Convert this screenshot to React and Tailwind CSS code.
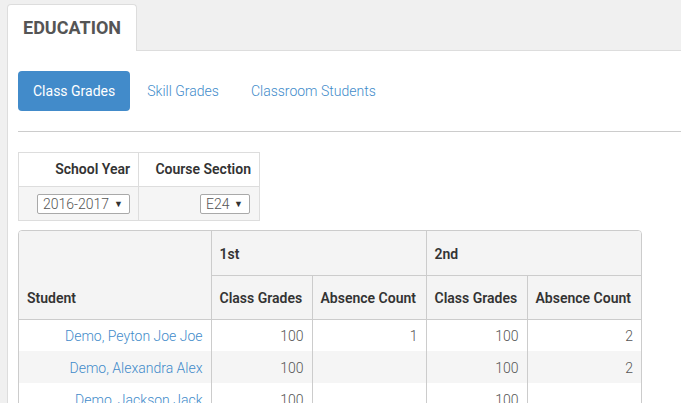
import React from "react";

const rows = [
  { name: "Demo, Peyton Joe Joe", g1: "100", a1: "1", g2: "100", a2: "2" },
  { name: "Demo, Alexandra Alex", g1: "100", a1: "", g2: "100", a2: "2" },
  { name: "Demo, Jackson Jack", g1: "100", a1: "", g2: "100", a2: "" },
];

function Select({ value, width }) {
  return (
    <span
      className={`inline-flex items-center justify-between whitespace-nowrap h-[20px] border border-[#a9a9a9] rounded-[2px] bg-white pl-[5px] pr-[6px] text-[14px] font-light leading-none text-[#555] align-middle ${width}`}
    >
      <span>{value}</span>
      <span className="text-[9px] text-[#333] ml-[4px]">▼</span>
    </span>
  );
}

export default function App() {
  return (
    <div
      className="h-[403px] w-[681px] overflow-hidden bg-[#f0f0f0] text-[#333]"
      style={{ fontFamily: "Roboto, 'Liberation Sans', sans-serif" }}
    >
      <div className="pt-[4px] pl-[7px] flex">
        <div className="relative z-10 -mb-px w-[130px] h-[47px] bg-white border border-[#dddddd] border-b-0 rounded-t-[4px] flex items-center pl-[15px] pb-[2px]">
          <span className="text-[18px] font-bold text-[#555]">EDUCATION</span>
        </div>
      </div>
      <div className="ml-[7px] bg-white border-t border-l border-[#dddddd] pl-[10px] pt-[20px] h-[400px]">
        <div className="flex items-center">
          <div className="h-[40px] px-[15px] flex items-center rounded-[4px] bg-[#428bca] text-white text-[14px]">
            Class Grades
          </div>
          <div className="ml-[2px] h-[40px] px-[15px] flex items-center text-[14px] font-light text-[#428bca]">
            Skill Grades
          </div>
          <div className="ml-[2px] h-[40px] px-[15px] flex items-center text-[14px] font-light text-[#428bca]">
            Classroom Students
          </div>
        </div>
        <div className="mt-[20px] h-px bg-[#cccccc]" />
        <table className="mt-[20px] border-collapse text-[14px]">
          <tbody>
            <tr>
              <th className="w-[120px] h-[34px] border border-[#dddddd] text-right font-semibold px-[8px] whitespace-nowrap">School Year</th>
              <th className="w-[121px] h-[34px] border border-[#dddddd] text-right font-semibold px-[8px] whitespace-nowrap">Course Section</th>
            </tr>
            <tr className="bg-[#f5f5f5]">
              <td className="h-[34px] p-0 border border-[#dddddd] text-right pr-[8px]">
                <Select value="2016-2017" width="w-[93px]" />
              </td>
              <td className="h-[34px] p-0 border border-[#dddddd] text-right pr-[9px]">
                <Select value="E24" width="w-[50px]" />
              </td>
            </tr>
          </tbody>
        </table>
        <div className="mt-[9px] w-[624px] border border-[#cccccc] rounded-t-[4px] overflow-hidden">
          <table className="w-full border-collapse text-[14px] table-fixed">
            <colgroup>
              <col className="w-[192px]" />
              <col className="w-[101px]" />
              <col className="w-[114px]" />
              <col className="w-[101px]" />
              <col />
            </colgroup>
            <thead className="bg-[#f4f4f4]">
              <tr>
                <th rowSpan={2} className="border-r border-b border-[#cccccc] text-left align-bottom font-semibold px-[8px] pb-[10px]">
                  Student
                </th>
                <th colSpan={2} className="h-[44px] border-r border-b border-[#cccccc] text-left font-semibold px-[8px] pt-[3px]">1st</th>
                <th colSpan={2} className="h-[44px] border-b border-[#cccccc] text-left font-semibold px-[8px] pt-[3px]">2nd</th>
              </tr>
              <tr>
                <th className="h-[44px] border-r border-b border-[#cccccc] text-left font-semibold px-[8px] pt-[3px] whitespace-nowrap">Class Grades</th>
                <th className="h-[44px] border-r border-b border-[#cccccc] text-left font-semibold px-[8px] pt-[3px] whitespace-nowrap">Absence Count</th>
                <th className="h-[44px] border-r border-b border-[#cccccc] text-left font-semibold px-[8px] pt-[3px] whitespace-nowrap">Class Grades</th>
                <th className="h-[44px] border-b border-[#cccccc] text-left font-semibold px-[8px] pt-[3px] whitespace-nowrap">Absence Count</th>
              </tr>
            </thead>
            <tbody className="font-light">
              {rows.map((r, i) => (
                <tr key={i} className={i % 2 === 1 ? "bg-[#f5f5f5]" : "bg-white"}>
                  <td className="h-[32px] border-r border-[#cccccc] text-right px-[8px] pt-[2px] text-[#428bca] whitespace-nowrap">{r.name}</td>
                  <td className="h-[32px] border-r border-[#cccccc] text-right px-[8px] pt-[2px] text-[#555]">{r.g1}</td>
                  <td className="h-[32px] border-r border-[#cccccc] text-right px-[8px] pt-[2px] text-[#555]">{r.a1}</td>
                  <td className="h-[32px] border-r border-[#cccccc] text-right px-[8px] pt-[2px] text-[#555]">{r.g2}</td>
                  <td className="h-[32px] text-right px-[8px] pt-[2px] text-[#555]">{r.a2}</td>
                </tr>
              ))}
            </tbody>
          </table>
        </div>
      </div>
    </div>
  );
}
